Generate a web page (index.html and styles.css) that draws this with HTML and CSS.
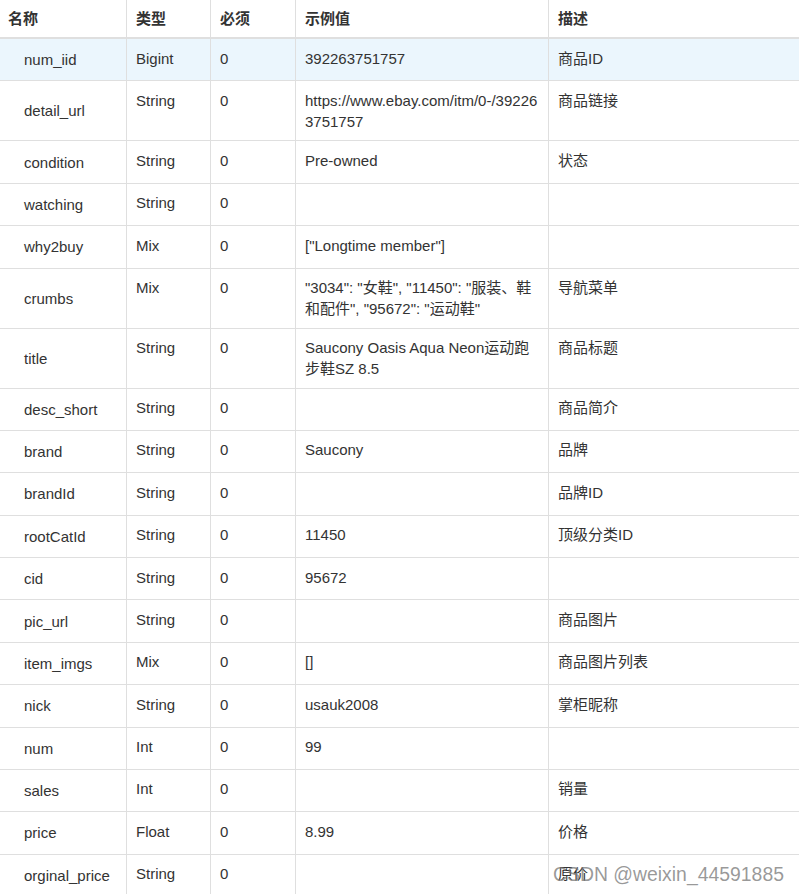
FILE: index.html
```html
<!DOCTYPE html>
<html lang="zh">
<head>
<meta charset="utf-8">
<title>API</title>
<link rel="stylesheet" href="styles.css">
</head>
<body>
<div class="wrap">
<table class="api">
<colgroup><col class="c1"><col class="c2"><col class="c3"><col class="c4"><col class="c5"></colgroup>
<thead>
<tr><th>名称</th><th>类型</th><th>必须</th><th>示例值</th><th>描述</th></tr>
</thead>
<tbody>
<tr class="hl"><td>num_iid</td><td>Bigint</td><td>0</td><td>392263751757</td><td>商品ID</td></tr>
<tr><td>detail_url</td><td>String</td><td>0</td><td>https://www.ebay.com/itm/0-/392263751757</td><td>商品链接</td></tr>
<tr><td>condition</td><td>String</td><td>0</td><td>Pre-owned</td><td>状态</td></tr>
<tr><td>watching</td><td>String</td><td>0</td><td></td><td></td></tr>
<tr><td>why2buy</td><td>Mix</td><td>0</td><td>["Longtime member"]</td><td></td></tr>
<tr><td>crumbs</td><td>Mix</td><td>0</td><td class="nb">"3034": "女鞋", "11450": "服装、鞋和配件", "95672": "运动鞋"</td><td>导航菜单</td></tr>
<tr><td>title</td><td>String</td><td>0</td><td>Saucony Oasis Aqua Neon运动跑步鞋SZ 8.5</td><td>商品标题</td></tr>
<tr><td>desc_short</td><td>String</td><td>0</td><td></td><td>商品简介</td></tr>
<tr><td>brand</td><td>String</td><td>0</td><td>Saucony</td><td>品牌</td></tr>
<tr><td>brandId</td><td>String</td><td>0</td><td></td><td>品牌ID</td></tr>
<tr><td>rootCatId</td><td>String</td><td>0</td><td>11450</td><td>顶级分类ID</td></tr>
<tr><td>cid</td><td>String</td><td>0</td><td>95672</td><td></td></tr>
<tr><td>pic_url</td><td>String</td><td>0</td><td></td><td>商品图片</td></tr>
<tr><td>item_imgs</td><td>Mix</td><td>0</td><td>[]</td><td>商品图片列表</td></tr>
<tr><td>nick</td><td>String</td><td>0</td><td>usauk2008</td><td>掌柜昵称</td></tr>
<tr><td>num</td><td>Int</td><td>0</td><td>99</td><td></td></tr>
<tr><td>sales</td><td>Int</td><td>0</td><td></td><td>销量</td></tr>
<tr><td>price</td><td>Float</td><td>0</td><td>8.99</td><td>价格</td></tr>
<tr><td>orginal_price</td><td>String</td><td>0</td><td></td><td>原价</td></tr>
</tbody>
</table>
<div class="watermark">CSDN @weixin_44591885</div>
</div>
</body>
</html>
```
FILE: styles.css
```css
html, body {
  margin: 0;
  padding: 0;
  background: #fff;
}
.wrap {
  position: relative;
  width: 799px;
  height: 894px;
  overflow: hidden;
}
.api {
  border-collapse: separate;
  border-spacing: 0;
  table-layout: fixed;
  width: 799px;
  font-family: "Liberation Sans", Arial, "Noto Sans CJK SC", sans-serif;
  font-size: 15px;
  color: #333;
}
.c1 { width: 127px; }
.c2 { width: 84px; }
.c3 { width: 85px; }
.c4 { width: 253px; }
.c5 { width: 250px; }
.api th {
  text-align: left;
  font-weight: bold;
  height: 39px;
  padding: 0 8px;
  line-height: 21px;
  vertical-align: middle;
  border-right: 1px solid #dfdfdf;
  border-bottom: 2px solid #dfdfdf;
  box-sizing: border-box;
}
.api th:nth-child(n+2) { padding-left: 9px; }
.api th:last-child, .api td:last-child { border-right: none; }
.api td {
  padding: 8.5px 9px 8.5px 9px;
  line-height: 21px;
  vertical-align: top;
  border-right: 1px solid #dfdfdf;
  border-bottom: 1px solid #dfdfdf;
  word-break: break-all;
}
.api td:first-child {
  padding: 10.2px 8px 10.2px 24px;
  vertical-align: middle;
  word-break: normal;
}
.api td.nb { word-break: normal; }
.api td:last-child { padding-left: 9px; }
.api tr.hl td { background: #ebf6fd; }
.watermark {
  position: absolute;
  left: 553px;
  top: 862px;
  font-family: "Liberation Sans", Arial, sans-serif;
  font-size: 19.4px;
  line-height: 24px;
  color: rgba(120, 120, 120, 0.75);
  white-space: nowrap;
}
```
